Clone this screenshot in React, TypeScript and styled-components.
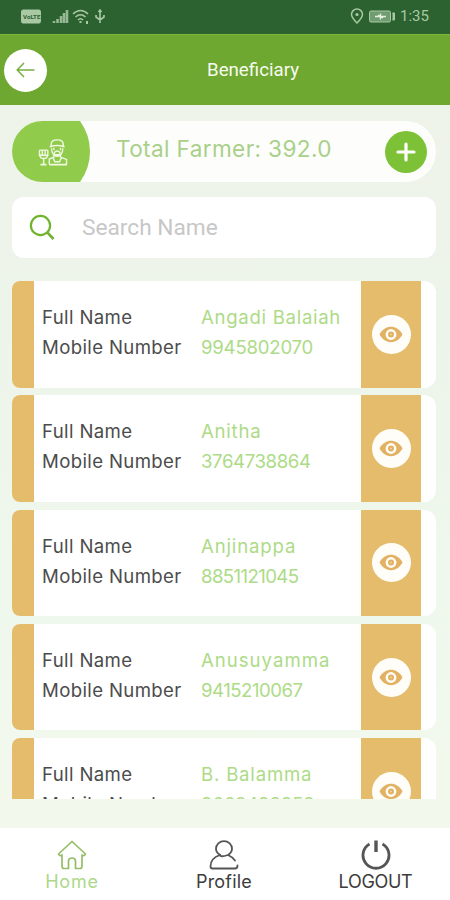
import React from "react";
import styled, { createGlobalStyle } from "styled-components";

const Global = createGlobalStyle`
  * { box-sizing: border-box; }
  body { margin: 0; font-family: Inter, "Liberation Sans", sans-serif; }
`;

const Screen = styled.div`
  width: 450px;
  height: 900px;
  display: flex;
  flex-direction: column;
  overflow: hidden;
  background: linear-gradient(180deg, #eff3ea 0%, #edf4ea 35%, #eff8ed 65%, #f4f8ec 100%);
`;

const StatusBar = styled.div`
  height: 34px;
  flex: none;
  display: flex;
  justify-content: space-between;
  padding: 0 20px 3px 21px;
  align-items: center;
  background: #2c6130;
  color: #a9c9a5;
`;

const StatusGroup = styled.div`
  display: flex;
  align-items: center;
`;

const Clock = styled.span`
  font: 400 15px/18px Roboto, sans-serif;
  margin-left: 4px;
  width: 30px;
  white-space: nowrap;
`;

const Header = styled.header`
  height: 71px;
  flex: none;
  display: grid;
  grid-template-columns: 56px 1fr 0;
  align-items: center;
  padding-left: 4px;
  background: #6ea830;
  border-top: 1px solid #7db53c;
`;

const BackButton = styled.button`
  width: 43px;
  height: 43px;
  padding: 0;
  border: 0;
  border-radius: 50%;
  background: #fff;
  display: grid;
  place-items: center;
`;

const Title = styled.h1`
  margin: 0;
  padding-left: 147px;
  color: #f7fbef;
  font: 400 18.7px/24px Roboto, sans-serif;
`;

const Content = styled.main`
  height: 694px;
  flex: none;
  padding: 16px 14px 0 12px;
`;

const Summary = styled.section`
  height: 61px;
  display: flex;
  align-items: center;
  border-radius: 31px;
  background: #fdfefc;
  overflow: hidden;
`;

const FarmerTab = styled.div`
  width: 78px;
  height: 61px;
  padding-left: 3px;
  flex: none;
  display: grid;
  place-items: center;
  background: #91cb4b;
  clip-path: path("M0 0H68Q78 14 78 30.5Q78 47 68 61H0Z");
`;

const Total = styled.div`
  flex: 1;
  padding: 0 0 6px 26px;
  color: #a9d08a;
  font-size: 22.6px;
  letter-spacing: 0.36px;
  white-space: nowrap;
`;

const AddButton = styled.button`
  width: 42px;
  height: 42px;
  margin-right: 9px;
  padding: 0;
  border: 0;
  border-radius: 50%;
  background: #7dc236;
  display: grid;
  place-items: center;
`;

const SearchBox = styled.label`
  height: 61px;
  margin-top: 15px;
  display: flex;
  align-items: center;
  padding-left: 17px;
  gap: 26px;
  border-radius: 12px;
  background: #fff;
  color: #c7c7c7;
  font: 400 22.7px/28px Roboto, sans-serif;
`;

const List = styled.section`
  height: 518px;
  margin-top: 23px;
  overflow: hidden;
`;

const Card = styled.article`
  height: 106.5px;
  margin-bottom: 7.8px;
  display: grid;
  grid-template-columns: 22px 1fr 60px 15px;
  border-radius: 8px 12px 12px 8px;
  overflow: hidden;
  background: #fff;
`;

const Stripe = styled.div`
  background: #e4bc6c;
`;

const Fields = styled.dl`
  margin: 0;
  padding: 21px 0 0 8px;
  display: grid;
  grid-template-columns: 159px 1fr;
  grid-auto-rows: 30px;
  line-height: 30px;
  font-size: 18.6px;
  white-space: nowrap;
`;

const Label = styled.dt`
  color: #4c4c4c;
  letter-spacing: 0.36px;
`;

const Value = styled.dd<{ $spacing: number }>`
  margin: 0;
  color: #addb87;
  letter-spacing: ${(p) => p.$spacing}px;
`;

const ViewPanel = styled.div`
  background: #e4bc6c;
  display: grid;
  place-items: center;
`;

const EyeButton = styled.button`
  width: 39px;
  height: 39px;
  padding: 0;
  border: 0;
  border-radius: 50%;
  background: #fefdf8;
  display: grid;
  place-items: center;
`;

const Nav = styled.nav`
  margin-top: 29px;
  height: 72px;
  flex: none;
  display: grid;
  grid-template-columns: 144px 160px 143px;
  background: #fff;
`;

const NavItem = styled.a<{ $color: string; $spacing: number }>`
  display: flex;
  flex-direction: column;
  align-items: center;
  padding-top: 12px;
  color: ${(p) => p.$color};
  font-size: 18px;
  line-height: 23px;
  letter-spacing: ${(p) => p.$spacing}px;
  white-space: nowrap;
`;

const EyeIcon = () => (
  <svg width="24" height="17" viewBox="0 0 24 17">
    <path d="M.5 8.5C6-1.7 18-1.7 23.5 8.5C18 18.7 6 18.7.5 8.5Z" fill="#e2b163" />
    <circle cx="12" cy="8.5" r="5.4" fill="#fffdf7" />
    <circle cx="12" cy="8.5" r="3" fill="#e2b163" />
    <circle cx="12" cy="8.5" r="0.8" fill="#f7e2b8" />
  </svg>
);

const FarmerIcon = () => (
  <svg width="30" height="28" viewBox="0 0 32 30" fill="none" stroke="#eff8e2" strokeWidth="1.5">
    <path d="M14 10V7C14 3.500 16 2 20.500 2S27 3.500 27 7V10M12.500 9.500Q20.500 6.500 28.500 9.500M14.500 11C14.500 16 17 19.500 20.500 19.500S26.500 16 26.500 11M17 10.500V13M24 10.500V13M17.500 15.500Q20.500 12.500 23.500 15.500V18H17.500Z" />
    <path d="M17 18V20.500L12 22.500V28M24 18V20.500L30.500 23V28M16 21L18 25.500H23L25 21" />
    <path d="M1.500 13V18.500H10.500V13M4.500 13V18.500M7.500 13V18.500M1.500 13H10.500M2 18.500Q2 22 6 22T10 18.500M6 21V28" />
    <path d="M2.500 28.500H9M12 28.500H31" strokeWidth="2" />
  </svg>
);

const people = [
  { name: "Angadi Balaiah", phone: "9945802070", ns: 0.7, ps: -0.22 },
  { name: "Anitha", phone: "3764738864", ns: 0.75, ps: -0.4 },
  { name: "Anjinappa", phone: "8851121045", ns: 0.85, ps: -0.6 },
  { name: "Anusuyamma", phone: "9415210067", ns: 1, ps: -0.5 },
  { name: "B. Balamma", phone: "9663498859", ns: 0.8, ps: -0.2 },
];

export default function App() {
  return (
    <Screen>
      <Global />
      <StatusBar>
        <StatusGroup>
          <svg width="85" height="18" viewBox="0 0 85 18" fill="none" stroke="currentColor">
            <rect x="0.5" y="3" width="19" height="13" rx="1.5" fill="currentColor" />
            <text x="2" y="12" fontSize="6.200" fontWeight="700" fontFamily="Roboto" fill="#2c6130" stroke="none">VoLTE</text>
            <path d="M33 16V14M36.500 16V12M40 16V9M43 16V6M46 16V3" strokeWidth="2.600" opacity="0.85" />
            <path d="M52 7Q59.500 0 67 7M54.500 10Q59.500 5.500 64.500 10M57 13Q59.500 10.500 62 13" strokeWidth="1.6" />
            <path d="M59.500 14V16M66 14V17" strokeWidth="2" />
            <path d="M79 3V16M75 8V10L79 13L83 10V8M77.500 5L79 3L80.500 5" strokeWidth="1.6" />
          </svg>
        </StatusGroup>
        <StatusGroup>
          <svg width="46" height="18" viewBox="0 0 46 18" fill="none" stroke="currentColor">
            <path d="M7 16Q1.500 10.500 1.500 7.500A5.500 5.500 0 0 1 12.500 7.500Q12.500 10.500 7 16Z" strokeWidth="1.5" />
            <circle cx="7" cy="7.500" r="1.600" fill="currentColor" stroke="none" />
            <rect x="19.500" y="4" width="21" height="11" rx="1.500" fill="#6f9c71" />
            <path d="M42.500 6H44.500V13H42.500" fill="currentColor" />
            <path d="M25 9.500H36M30.500 6.500V12.500M28 8L33 11" stroke="#e3f0dd" strokeWidth="1.4" />
          </svg>
          <Clock>1:35</Clock>
        </StatusGroup>
      </StatusBar>
      <Header>
        <BackButton aria-label="Back">
          <svg width="19" height="16" viewBox="0 0 19 16" fill="none" stroke="#78ad40" strokeWidth="1.5">
            <path d="M18.500 8H1.500M8 1L1.200 8L8 15" />
          </svg>
        </BackButton>
        <Title>Beneficiary</Title>
      </Header>
      <Content>
        <Summary>
          <FarmerTab><FarmerIcon /></FarmerTab>
          <Total>Total Farmer: 392.0</Total>
          <AddButton aria-label="Add">
            <svg width="20" height="20" viewBox="0 0 20 20" stroke="#fff" strokeWidth="3.200" strokeLinecap="round">
              <path d="M10 2V18M2 10H18" />
            </svg>
          </AddButton>
        </Summary>
        <SearchBox>
          <svg width="27" height="27" viewBox="0 0 27 27" fill="none" stroke="#70b32d">
            <circle cx="11.500" cy="11.500" r="9.600" strokeWidth="2.200" />
            <path d="M18.300 18.300L24.500 25" strokeWidth="2.600" />
          </svg>
          <span>Search Name</span>
        </SearchBox>
        <List>
          {people.map((p) => (
            <Card key={p.name}>
              <Stripe />
              <Fields>
                <Label>Full Name</Label>
                <Value $spacing={p.ns}>{p.name}</Value>
                <Label>Mobile Number</Label>
                <Value $spacing={p.ps}>{p.phone}</Value>
              </Fields>
              <ViewPanel>
                <EyeButton aria-label="View"><EyeIcon /></EyeButton>
              </ViewPanel>
            </Card>
          ))}
        </List>
      </Content>
      <Nav>
        <NavItem $color="#add88b" $spacing={0.8}>
          <svg width="30" height="30" viewBox="0 0 30 30" fill="none" stroke="#95bd68" strokeWidth="1.700" strokeLinejoin="round">
            <path d="M15 1.500L1.500 14Q2.500 16.500 5 15V26Q5 28.500 7 28.500H11.500V21Q11.500 18 15 18T18.500 21V28.500H23Q25 28.500 25 26V15Q27.500 16.500 28.500 14Z" />
          </svg>
          Home
        </NavItem>
        <NavItem $color="#3c3c3c" $spacing={0.2}>
          <svg width="30" height="30" viewBox="0 0 30 30" fill="none" stroke="#555" strokeWidth="1.800" strokeLinecap="round">
            <path d="M11 15Q7 12.500 7 8.800A8 7.600 0 0 1 23 8.800Q23 12.500 19 15Q11 17.500 11 15Q1.500 18 1.500 26.500Q1.500 28.500 3.500 28.500H26Q28.500 28.500 28.500 25.500M19 15Q23.500 17 26 20.500" />
          </svg>
          Profile
        </NavItem>
        <NavItem $color="#3c3c3c" $spacing={-0.3}>
          <svg width="30" height="30" viewBox="0 0 30 30" fill="none" stroke="#555">
            <path d="M8.500 4A13 13 0 1 0 21.500 4" strokeWidth="2.800" />
            <path d="M15 0.500V12" strokeWidth="3.400" />
          </svg>
          LOGOUT
        </NavItem>
      </Nav>
    </Screen>
  );
}
